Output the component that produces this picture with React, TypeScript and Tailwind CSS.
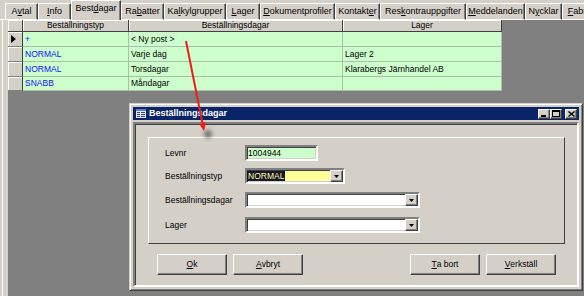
import React from "react";

type Tab = { t: string; u: number; w: number; sel?: boolean };

const tabs: Tab[] = [
  { t: "Avtal", u: 1, w: 33 },
  { t: "Info", u: 0, w: 33 },
  { t: "Bestdagar", u: 4, w: 50, sel: true },
  { t: "Rabatter", u: 2, w: 43 },
  { t: "Kalkylgrupper", u: 2, w: 62 },
  { t: "Lager", u: 0, w: 34 },
  { t: "Dokumentprofiler", u: 0, w: 75 },
  { t: "Kontakter", u: 7, w: 45 },
  { t: "Reskontrauppgifter", u: 3, w: 86 },
  { t: "Meddelanden", u: 0, w: 59 },
  { t: "Nycklar", u: 1, w: 37 },
  { t: "Fabrikat", u: 0, w: 44 },
];

const rows = [
  { typ: "+", dagar: "< Ny post >", lager: "", current: true, h: "h-[15px]" },
  { typ: "NORMAL", dagar: "Varje dag", lager: "Lager 2", h: "h-[15px]" },
  { typ: "NORMAL", dagar: "Torsdagar", lager: "Klarabergs Järnhandel AB", h: "h-[15px]" },
  { typ: "SNABB", dagar: "Måndagar", lager: "", h: "h-[14px]" },
];

// text with an underlined access key
const Mn = ({ t, u }: { t: string; u: number }) => (
  <>
    {t.slice(0, u)}
    <span className="underline underline-offset-[1px]">{t[u]}</span>
    {t.slice(u + 1)}
  </>
);

const sunken =
  "border-2 border-t-[#808080] border-l-[#808080] border-b-white border-r-white shadow-[inset_1px_1px_#404040,inset_-1px_-1px_#d4d0c8]";
const raised =
  "border border-t-white border-l-white border-r-[#404040] border-b-[#404040] shadow-[inset_-1px_-1px_#808080] bg-[#d4d0c8]";

const DropButton = () => (
  <div className={`ml-auto w-[13px] h-full flex items-center justify-center ${raised}`}>
    <svg width="5" height="3" viewBox="0 0 5 3">
      <path d="M0 0h5L2.5 3z" fill="#000" />
    </svg>
  </div>
);

const Button = ({ t, u }: { t: string; u: number }) => (
  <button className={`w-[70px] h-[21px] flex items-center justify-center text-[8.5px] text-black ${raised}`}>
    <Mn t={t} u={u} />
  </button>
);

const CaptionButton = ({ children }: { children: React.ReactNode }) => (
  <div className={`w-[12px] h-[10px] flex items-center justify-center ${raised}`}>{children}</div>
);

export default function App() {
  return (
    <div className="relative w-[584px] h-[296px] overflow-hidden bg-[#d4d0c8] font-['Liberation_Sans',Arial,sans-serif] text-black select-none">
      {/* Tab strip */}
      <div className="flex items-end h-[20px]">
        <div className="w-[5px] shrink-0 h-px bg-white" />
        {tabs.map((tab) =>
          tab.sel ? (
            <div
              key={tab.t}
              style={{ width: tab.w }}
              className="shrink-0 h-[20px] flex items-start justify-center pt-[3px] border-t border-l border-r border-t-white border-l-white border-r-[#404040] shadow-[inset_-1px_0_#808080] text-[9px] leading-none"
            >
              <Mn t={tab.t} u={tab.u} />
            </div>
          ) : (
            <div
              key={tab.t}
              style={{ width: tab.w }}
              className="shrink-0 h-[17px] flex items-center justify-center border border-t-white border-l-white border-r-[#404040] border-b-white shadow-[inset_-1px_0_#808080] text-[9px] leading-none"
            >
              <Mn t={tab.t} u={tab.u} />
            </div>
          )
        )}
        <div className="flex-1 h-px bg-white" />
      </div>

      {/* Panel */}
      <div className="flex h-[276px]">
        <div className="w-[8px] shrink-0 bg-[#d4d0c8] shadow-[inset_2px_0_#d4d0c8,inset_3px_0_#fff]" />
        <div className="flex-1 bg-[#808080] flex flex-col items-start">
          {/* Grid */}
          <div className="w-[494px] shrink-0 text-[8.5px] leading-none">
            <div className="flex h-[12px]">
              <div className="w-[15px] bg-[#d4d0c8] border-r border-b border-[#404040] shadow-[inset_1px_1px_#fff]" />
              <div className="w-[106px] flex items-center justify-center bg-[#d4d0c8] border-r border-b border-[#404040] shadow-[inset_1px_1px_#fff]">
                Beställningstyp
              </div>
              <div className="w-[214px] flex items-center justify-center bg-[#d4d0c8] border-r border-b border-[#404040] shadow-[inset_1px_1px_#fff]">
                Beställningsdagar
              </div>
              <div className="w-[159px] flex items-center justify-center bg-[#d4d0c8] border-r border-b border-[#404040] shadow-[inset_1px_1px_#fff]">
                Lager
              </div>
            </div>
            {rows.map((r, i) => (
              <div key={i} className={`flex ${r.h}`}>
                <div className="w-[15px] flex items-center pl-[3px] bg-[#d4d0c8] border-r border-b border-r-[#404040] border-b-[#808080] shadow-[inset_1px_1px_#fff]">
                  {r.current && (
                    <svg width="5" height="8" viewBox="0 0 5 8">
                      <path d="M0 0L5 4L0 8z" fill="#000" />
                    </svg>
                  )}
                </div>
                <div className="w-[106px] flex items-center pl-[2px] bg-[#ccffcc] border-r border-b border-[#a9bfa9] text-[#1010ff]">
                  {r.typ}
                </div>
                <div className="w-[214px] flex items-center pl-[2px] bg-[#ccffcc] border-r border-b border-[#a9bfa9]">
                  {r.dagar}
                </div>
                <div className="w-[159px] flex items-center pl-[2px] bg-[#ccffcc] border-r border-b border-[#a9bfa9]">
                  {r.lager}
                </div>
              </div>
            ))}
          </div>

          {/* Dialog window */}
          <div className="mt-[12px] ml-[121px] w-[454px] h-[188px] shrink-0 flex flex-col bg-[#d4d0c8] p-[3px] border border-t-[#d4d0c8] border-l-[#d4d0c8] border-r-[#404040] border-b-[#404040] shadow-[inset_1px_1px_#fff,inset_-1px_-1px_#808080]">
            <div className="h-[13px] shrink-0 flex items-center bg-[#0a246a] pl-[3px] pr-[2px]">
              <svg width="10" height="9" viewBox="0 0 10 9" className="mr-[3px]">
                <rect x="0" y="0" width="10" height="9" fill="#e8e8f0" />
                <rect x="0" y="0" width="10" height="2" fill="#6080c0" />
                <rect x="1" y="3" width="3" height="1" fill="#404080" />
                <rect x="5" y="3" width="4" height="1" fill="#404080" />
                <rect x="1" y="5" width="3" height="1" fill="#404080" />
                <rect x="5" y="5" width="4" height="1" fill="#404080" />
                <rect x="1" y="7" width="3" height="1" fill="#404080" />
                <rect x="5" y="7" width="4" height="1" fill="#404080" />
              </svg>
              <span className="text-white font-bold text-[9px] leading-none">Beställningsdagar</span>
              <div className="ml-auto flex">
                <CaptionButton>
                  <svg width="6" height="6" viewBox="0 0 6 6">
                    <rect x="0" y="4" width="5" height="2" fill="#000" />
                  </svg>
                </CaptionButton>
                <CaptionButton>
                  <svg width="8" height="7" viewBox="0 0 8 7">
                    <rect x="0.5" y="0.5" width="7" height="6" fill="none" stroke="#000" />
                    <rect x="0" y="0" width="8" height="2" fill="#000" />
                  </svg>
                </CaptionButton>
                <div className="w-[3px]" />
                <CaptionButton>
                  <svg width="7" height="6" viewBox="0 0 7 6">
                    <path d="M0.5 0.5L6.5 5.5M6.5 0.5L0.5 5.5" stroke="#000" strokeWidth="1.4" />
                  </svg>
                </CaptionButton>
              </div>
            </div>

            <div className={`mt-[2px] flex-1 flex flex-col bg-[#d4d0c8] ${sunken}`}>
              {/* Group panel */}
              <div className="mt-[13px] ml-[13px] w-[417px] h-[107px] shrink-0 border border-t-white border-l-white border-r-[#404040] border-b-[#404040] pt-[7px] pl-[16px] flex flex-col text-[8.5px] leading-none">
                <div className="flex items-center h-[16px]">
                  <div className="w-[80px]">Levnr</div>
                  <div className={`w-[73px] h-full flex items-center pl-[1px] bg-[#ccffcc] ${sunken}`}>1004944</div>
                </div>
                <div className="flex items-center h-[16px] mt-[7px]">
                  <div className="w-[80px]">Beställningstyp</div>
                  <div className={`w-[100px] h-full flex items-center bg-[#ffff99] ${sunken}`}>
                    <span className="bg-[#17172b] text-[#ffff99] px-[1px] py-[1px]">NORMAL</span>
                    <DropButton />
                  </div>
                </div>
                <div className="flex items-center h-[16px] mt-[8px]">
                  <div className="w-[80px]">Beställningsdagar</div>
                  <div className={`w-[175px] h-full flex items-center bg-white ${sunken}`}>
                    <DropButton />
                  </div>
                </div>
                <div className="flex items-center h-[16px] mt-[9px]">
                  <div className="w-[80px]">Lager</div>
                  <div className={`w-[175px] h-full flex items-center bg-white ${sunken}`}>
                    <DropButton />
                  </div>
                </div>
              </div>

              {/* Buttons */}
              <div className="mt-[10px] flex justify-between pl-[22px] pr-[21px]">
                <div className="flex gap-[6px]">
                  <Button t="Ok" u={0} />
                  <Button t="Avbryt" u={0} />
                </div>
                <div className="flex gap-[6px]">
                  <Button t="Ta bort" u={0} />
                  <Button t="Verkställ" u={0} />
                </div>
              </div>
            </div>
          </div>
        </div>
      </div>

      {/* Red annotation arrow */}
      <svg className="absolute left-0 top-0 pointer-events-none" width="584" height="296" viewBox="0 0 584 296">
        <defs>
          <filter id="blur" x="-50%" y="-50%" width="200%" height="200%">
            <feGaussianBlur stdDeviation="2" />
          </filter>
        </defs>
        <ellipse cx="208" cy="134" rx="4" ry="4" fill="#303030" opacity="0.6" filter="url(#blur)" />
        <line x1="186" y1="41" x2="202.6" y2="124" stroke="#ee1c1c" strokeWidth="2" />
        <path d="M204 131L206.2 122.4L199 123.8z" fill="#ee1c1c" />
      </svg>
    </div>
  );
}
